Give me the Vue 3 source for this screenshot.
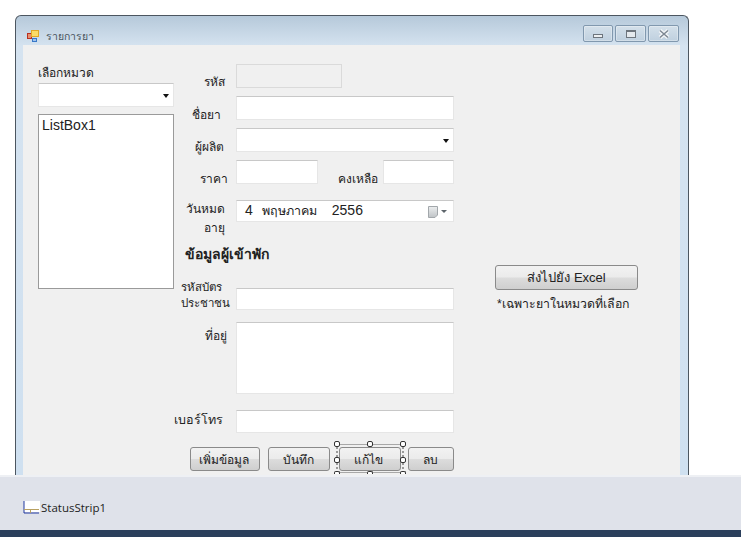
<template>
  <div class="page">
    <div class="window">
      <div class="titlebar">
        <div class="title-left">
          <svg class="app-icon" width="12" height="12" viewBox="0 0 12 12">
            <rect x="0.5" y="3.5" width="4" height="5" fill="#e89070" stroke="#b83020" />
            <rect x="4.5" y="0.5" width="7" height="6" fill="#fbdc68" stroke="#e0a828" />
            <rect x="5.5" y="8.5" width="4" height="3" fill="#a0c4ee" stroke="#3878c8" />
          </svg>
          <span class="title-text">รายการยา</span>
        </div>
        <div class="caption">
          <div class="cap-btn"><span class="cap-min"></span></div>
          <div class="cap-btn wider"><span class="cap-max"></span></div>
          <div class="cap-btn wider">
            <svg width="12" height="10" viewBox="0 0 12 10">
              <path d="M2 1.5 L10 8.5 M10 1.5 L2 8.5" stroke="#f4f6f8" stroke-width="4" />
              <path d="M2 1.5 L10 8.5 M10 1.5 L2 8.5" stroke="#7d8792" stroke-width="1.5" />
            </svg>
          </div>
        </div>
      </div>
      <div class="client">
        <div class="col-left">
          <div class="pick-label">เลือกหมวด</div>
          <div class="field combo-left"><span class="arrow"></span></div>
          <div class="listbox">ListBox1</div>
        </div>

        <div class="col-form">
          <div class="row">
            <label class="lbl l-code">รหัส</label>
            <div class="field code"></div>
          </div>
          <div class="row">
            <label class="lbl l-name">ชื่อยา</label>
            <div class="field wide"></div>
          </div>
          <div class="row">
            <label class="lbl l-maker">ผู้ผลิต</label>
            <div class="field wide"><span class="arrow"></span></div>
          </div>
          <div class="row">
            <label class="lbl l-price">ราคา</label>
            <div class="field price"></div>
            <label class="lbl-stock">คงเหลือ</label>
            <div class="field stock"></div>
          </div>
          <div class="row row-date">
            <label class="lbl lbl-two l-date">วันหมด<br />อายุ</label>
            <div class="field wide date">
              <span class="date-text">4<span class="month">พฤษภาคม</span>2556</span>
              <svg class="cal" width="19" height="12" viewBox="0 0 19 12">
                <defs>
                  <linearGradient id="calFill" x1="0" y1="0" x2="0" y2="1">
                    <stop offset="0" stop-color="#eceeef" />
                    <stop offset="1" stop-color="#bfc3c6" />
                  </linearGradient>
                </defs>
                <path d="M0.5 0.5 H9.5 V9 L7 11.5 H0.5 Z" fill="url(#calFill)" stroke="#a2a7ab" />
                <path d="M13 4 H19 L16 7 Z" fill="#5d646b" />
              </svg>
            </div>
          </div>
          <div class="heading">ข้อมูลผู้เข้าพัก</div>
          <div class="row row-card">
            <label class="lbl lbl-card">รหัสบัตร<br />ประชาชน</label>
            <div class="field wide"></div>
          </div>
          <div class="row row-address">
            <label class="lbl l-addr">ที่อยู่</label>
            <div class="field wide address"></div>
          </div>
          <div class="row row-phone">
            <label class="lbl l-phone">เบอร์โทร</label>
            <div class="field wide"></div>
          </div>
          <div class="buttons">
            <button class="btn b-add">เพิ่มข้อมูล</button>
            <button class="btn b-save">บันทึก</button>
            <div class="selected">
              <button class="btn b-edit">แก้ไข</button>
              <i v-for="h in handles" :key="h" class="handle" :class="h"></i>
            </div>
            <button class="btn b-del">ลบ</button>
          </div>
        </div>

        <div class="col-right">
          <button class="btn excel">ส่งไปยัง Excel</button>
          <div class="note">*เฉพาะยาในหมวดที่เลือก</div>
        </div>
      </div>
    </div>
    <div class="tray">
      <svg class="strip-icon" width="17" height="13" viewBox="0 0 17 13">
        <rect x="1" y="0" width="16" height="11" fill="#fff" />
        <path d="M1 0 V12 H16" fill="none" stroke="#2038a0" stroke-width="1" />
        <path d="M1 8.5 H16" stroke="#b8a060" stroke-width="1" />
        <path d="M7.5 8 V12" stroke="#b8a060" stroke-width="1" />
      </svg>
      <span class="strip-text">StatusStrip1</span>
    </div>
    <div class="footer"></div>
  </div>
</template>

<script setup>
const handles = ['tl', 'tc', 'tr', 'ml', 'mr', 'bl', 'bc', 'br']
</script>

<style>
html, body { margin: 0; background: #fff; }
</style>

<style scoped>
.page {
  width: 741px;
  height: 537px;
  overflow: hidden;
  background: #fff;
  display: flex;
  flex-direction: column;
  font-family: "Liberation Sans", "Noto Sans", "DejaVu Sans", sans-serif;
  font-size: 12px;
  color: #222;
}
.window {
  box-sizing: border-box;
  flex: none;
  width: 674px;
  height: 460px;
  margin: 15px 0 0 15px;
  padding: 0 8px 0 7px;
  border: 1px solid #4c5660;
  border-bottom: 0;
  border-radius: 6px 6px 0 0;
  background: linear-gradient(180deg, #b6c9da 0, #d5e3f0 30px, #cfe0f0 100%);
  display: flex;
  flex-direction: column;
}
.titlebar {
  height: 29px;
  flex: none;
  display: flex;
  justify-content: space-between;
  align-items: flex-start;
}
.title-left {
  display: flex;
  align-items: center;
  gap: 7px;
  padding: 11px 0 0 4px;
}
.title-text { font-size: 10.5px; color: #4a5560; margin-top: 1px; }
.caption { display: flex; gap: 2px; padding: 9px 1px 0 0; }
.cap-btn {
  box-sizing: border-box;
  width: 30px;
  height: 17px;
  border: 1px solid #8198ae;
  border-radius: 2px;
  background: linear-gradient(180deg, #d4e0ea, #bfd0df);
  box-shadow: inset 0 0 0 1px rgba(255, 255, 255, .3);
  display: flex;
  align-items: center;
  justify-content: center;
}
.wider { width: 31px; }
.cap-min {
  box-sizing: border-box;
  width: 10px;
  height: 4px;
  margin-top: 5px;
  background: #eceff1;
  border: 1px solid #6d757d;
}
.cap-max {
  box-sizing: border-box;
  width: 10px;
  height: 8px;
  background: #e4e9ed;
  border: 1px solid #6d757d;
  border-top-width: 2px;
}
.client {
  flex: 1;
  background: #f0f0f0;
  display: flex;
  align-items: flex-start;
}
.col-left {
  width: 136px;
  margin-left: 15px;
  padding-top: 21px;
  flex: none;
}
.pick-label { height: 17px; line-height: 14px; font-size: 12px; }
.field {
  box-sizing: border-box;
  height: 24px;
  background: #fff;
  border: 1px solid #e6e6e6;
  border-top-color: #c8c8c8;
  position: relative;
}
.combo-left { width: 136px; }
.arrow {
  position: absolute;
  right: 4px;
  top: 10px;
  border: 3.5px solid transparent;
  border-top: 4px solid #111;
  border-bottom: 0;
}
.listbox {
  box-sizing: border-box;
  margin-top: 7px;
  height: 175px;
  background: #fff;
  border: 1px solid #9a9a9a;
  padding: 2px 3px;
  font-size: 14px;
  line-height: 17px;
}
.col-form {
  width: 280px;
  padding-top: 19px;
  flex: none;
}
.row {
  display: flex;
  align-items: flex-start;
  height: 24px;
  margin-bottom: 8px;
}
.lbl {
  box-sizing: border-box;
  width: 62px;
  flex: none;
  text-align: right;
  white-space: nowrap;
  line-height: 38px;
  font-size: 12px;
}
.l-code { padding-right: 11px; line-height: 36px; }
.l-name { padding-right: 15px; }
.l-maker { padding-right: 12px; }
.l-price { padding-right: 8px; }
.l-date { padding-right: 11px; }
.l-addr { padding-right: 9px; line-height: 28px; }
.l-phone { padding-right: 14px; line-height: 20px; font-size: 12.5px; }
.lbl-two { line-height: 19px; }
.code { width: 106px; background: #f0f0f0; border-color: #dadada; }
.wide { width: 218px; }
.price { width: 82px; }
.lbl-stock {
  width: 60px;
  margin-right: 5px;
  flex: none;
  text-align: right;
  line-height: 38px;
  white-space: nowrap;
}
.stock { width: 71px; }
.row-date { margin-top: 16px; height: 22px; margin-bottom: 0; }
.date {
  height: 22px;
  display: flex;
  align-items: center;
  justify-content: space-between;
  padding: 0 6px 0 8px;
}
.date-text { font-size: 14px; white-space: nowrap; }
.month { font-size: 12.5px; margin: 0 15px 0 9px; }
.cal { flex: none; margin-top: 1px; }
.heading {
  margin: 21px 0 0 11px;
  height: 45px;
  font-weight: bold;
  font-size: 14px;
  line-height: 22px;
  white-space: nowrap;
}
.row-card { height: 22px; margin-bottom: 12px; }
.row-card .field { height: 22px; }
.lbl-card {
  margin-top: -9px;
  padding-left: 7px;
  text-align: left;
  line-height: 16px;
  font-size: 11.5px;
}
.row-address { height: 72px; margin-bottom: 16px; }
.address { height: 72px; }
.row-phone { height: 23px; margin-bottom: 14px; }
.row-phone .field { height: 23px; }
.buttons {
  display: flex;
  align-items: flex-start;
  margin-left: 16px;
  gap: 8px;
}
.btn {
  box-sizing: border-box;
  height: 24px;
  padding: 0 2px 0 0;
  border: 1px solid #8a8a8a;
  border-radius: 3px;
  background: linear-gradient(180deg, #f2f2f2 0, #ebebeb 48%, #dcdcdc 52%, #cfcfcf 100%);
  font: inherit;
  font-size: 12px;
  color: #222;
}
.b-add { width: 70px; }
.b-save { width: 62px; }
.b-del { width: 46px; margin-left: -1px; }
.selected { position: relative; width: 62px; height: 24px; margin-left: 1px; }
.b-edit { width: 62px; padding-right: 3px; }
.selected::before {
  content: "";
  position: absolute;
  inset: -3px -3px -2px;
  border-top: 1px solid #a8a8a8;
  border-bottom: 1px solid #a8a8a8;
  border-left: 2px dotted #999;
  border-right: 2px dotted #999;
}
.handle {
  position: absolute;
  box-sizing: border-box;
  width: 6px;
  height: 6px;
  background: #fff;
  border: 1px solid #333;
  border-radius: 2px;
}
.tl { left: -5px; top: -6px; }
.tc { left: 28px; top: -6px; }
.tr { right: -5px; top: -6px; }
.ml { left: -5px; top: 10px; }
.mr { right: -5px; top: 10px; }
.bl, .bc, .br { top: 24px; height: 3px; border-bottom: 0; border-radius: 2px 2px 0 0; }
.bl { left: -5px; }
.bc { left: 28px; }
.br { right: -5px; }
.col-right {
  width: 143px;
  margin-left: 41px;
  padding-top: 220px;
  flex: none;
}
.excel { width: 143px; height: 25px; font-size: 13px; padding: 0; }
.note { margin: 6px 0 0 2px; font-size: 12.3px; white-space: nowrap; line-height: 16px; }
.tray {
  flex: none;
  height: 55px;
  background: #dfe2ea;
  border-top: 2px solid #eef0f4;
  display: flex;
  align-items: center;
  padding: 7px 0 0 23px;
  gap: 1px;
  box-sizing: border-box;
}
.strip-text { font-family: "Open Sans", "Liberation Sans", sans-serif; font-size: 11.5px; color: #222; }
.footer { flex: none; height: 7px; background: #2b3f5c; }
</style>
